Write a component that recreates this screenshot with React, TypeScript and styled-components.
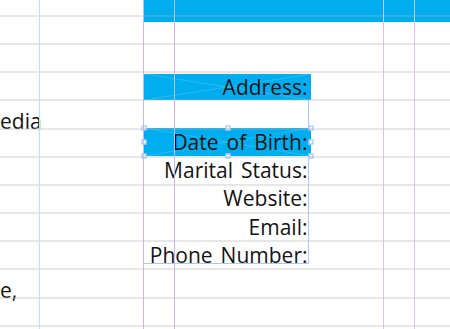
import React from "react";
import styled, { createGlobalStyle } from "styled-components";

const LINE = 28.16;
const BLUE = "#00aeef";
const FRAME_EDGE = "#a6c8ff";

const Global = createGlobalStyle`
  html, body { margin: 0; padding: 0; background: #fff; }
  body { font-family: "Open Sans", "Noto Sans", sans-serif; }
`;

const Canvas = styled.div`
  position: relative;
  width: 450px;
  height: 329px;
  overflow: hidden;
  display: flex;
  background: #fff;
  color: #141414;
  font-size: 21px;
  font-weight: 400;
  line-height: ${LINE}px;
`;

const LeftColumn = styled.div`
  flex: none;
  width: 144px;
  padding-top: 107.3px;
  box-sizing: border-box;
  white-space: nowrap;
`;

const Line = styled.div`
  height: ${LINE}px;
`;

const Main = styled.div`
  flex: 1;
  display: flex;
  flex-direction: column;
`;

const TopBar = styled.div`
  height: 22px;
  background: ${BLUE};
`;

const Label = styled.div<{ $fill?: boolean; $height?: number }>`
  position: relative;
  width: 167px;
  height: ${(p) => p.$height ?? LINE}px;
  line-height: ${(p) => p.$height ?? LINE}px;
  box-sizing: border-box;
  padding-right: 3.5px;
  text-align: right;
  white-space: nowrap;
  word-spacing: 2.5px;
  background: ${(p) => (p.$fill ? BLUE : "transparent")};
`;

const LabelText = styled.span`
  position: relative;
`;

const AddressFrame = styled.div`
  margin-top: 52px;
`;

const TextFrame = styled.div`
  width: 165px;
  height: 164px;
  box-sizing: border-box;
  border-right: 1px solid ${FRAME_EDGE};
  border-bottom: 1px solid ${FRAME_EDGE};
`;

const Cross = styled.svg`
  position: absolute;
  inset: 0;
  width: 100%;
  height: 100%;
`;

const Handle = styled.span<{ $x: number; $y: number }>`
  position: absolute;
  left: ${(p) => p.$x}%;
  top: ${(p) => p.$y}%;
  width: 3px;
  height: 3px;
  transform: translate(-50%, -50%);
  background: #fff;
  border: 1px solid #8fb8ff;
`;

const Overlay = styled.div`
  position: absolute;
  inset: 0;
  pointer-events: none;
  background: repeating-linear-gradient(
    to bottom,
    transparent 0px,
    transparent 15px,
    rgba(175, 175, 175, 0.3) 15px,
    rgba(175, 175, 175, 0.3) 17px,
    transparent 17px,
    transparent ${LINE}px
  );
`;

const Guide = styled.div<{ $x: number; $color: string }>`
  position: absolute;
  top: 0;
  bottom: 0;
  left: ${(p) => p.$x}px;
  width: 1.4px;
  background: ${(p) => p.$color};
`;

const FrameCross = () => (
  <Cross viewBox="0 0 100 100" preserveAspectRatio="none">
    <line x1="0" y1="0" x2="100" y2="100" stroke="rgba(255,255,255,0.16)" strokeWidth="1" vectorEffect="non-scaling-stroke" />
    <line x1="0" y1="100" x2="100" y2="0" stroke="rgba(255,255,255,0.16)" strokeWidth="1" vectorEffect="non-scaling-stroke" />
  </Cross>
);

const handles: [number, number][] = [
  [0, 0], [50, 0], [100, 0],
  [0, 50], [100, 50],
  [0, 100], [50, 100], [100, 100],
];

const labels = ["Marital Status:", "Website:", "Email:", "Phone Number:"];

export default function App() {
  return (
    <>
      <Global />
      <Canvas>
        <LeftColumn>
          <Line>edia</Line>
          <Line />
          <Line />
          <Line />
          <Line />
          <Line />
          <Line>e,</Line>
        </LeftColumn>
        <Main>
          <TopBar />
          <AddressFrame>
            <Label $fill $height={26}>
              <FrameCross />
              <LabelText>Address:</LabelText>
            </Label>
          </AddressFrame>
          <TextFrame>
            <Line />
            <Label $fill>
              <FrameCross />
              <LabelText>Date of Birth:</LabelText>
              {handles.map(([x, y]) => (
                <Handle key={`${x}-${y}`} $x={x} $y={y} />
              ))}
            </Label>
            {labels.map((t) => (
              <Label key={t}>
                <LabelText>{t}</LabelText>
              </Label>
            ))}
          </TextFrame>
        </Main>
        <Overlay>
          <Guide $x={39} $color="#9ff3f3" />
          <Guide $x={143} $color="#d2b2f7" />
          <Guide $x={174} $color="#d2b2f7" />
          <Guide $x={382.5} $color="#d9bff8" />
          <Guide $x={413.5} $color="#d9bff8" />
        </Overlay>
      </Canvas>
    </>
  );
}
